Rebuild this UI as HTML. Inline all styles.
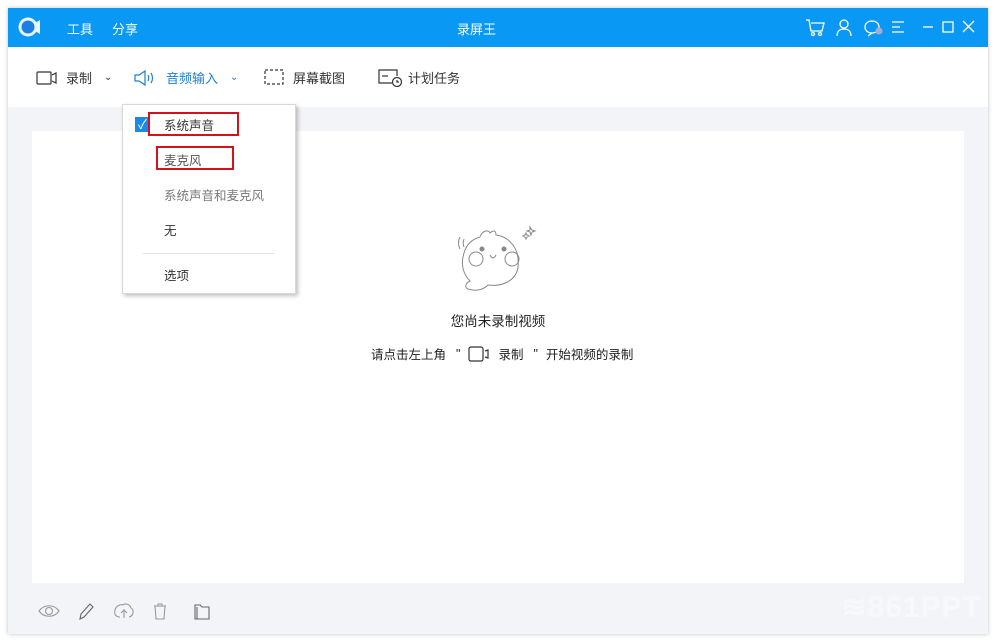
<!DOCTYPE html>
<html><head><meta charset="utf-8">
<style>
*{margin:0;padding:0;box-sizing:border-box}
body{width:996px;height:642px;background:#fff;font-family:"Liberation Sans","Noto Sans CJK SC",sans-serif;position:relative;overflow:hidden;font-size:13px;color:#333}
.win{position:absolute;left:8px;top:8px;width:980px;height:626px;background:#f3f4f8;box-shadow:0 0 4px rgba(0,0,0,.25)}
.title{position:absolute;left:0;top:0;width:980px;height:39px;background:#0a98f5;color:#fff}
.title span{position:absolute;top:11px;font-size:13px}
.tool{position:absolute;left:0;top:39px;width:980px;height:60px;background:#fff}
.tool .it{position:absolute;top:21px;font-size:13px;color:#333;display:flex;align-items:center}
.content{position:absolute;left:24px;top:123px;width:932px;height:452px;background:#fff}
.menu{position:absolute;left:122px;top:104px;width:174px;height:190px;background:#fff;border:1px solid #d8d8d8;box-shadow:2px 2px 4px rgba(0,0,0,.25)}
.menu div{position:absolute;left:41px;font-size:12.5px}
.red{position:absolute;border:2px solid #d4121c}
svg{display:block}
</style></head><body>
<div class="win">
 <div class="title">
  <svg style="position:absolute;left:10px;top:8px" width="24" height="22" viewBox="0 0 24 22"><circle cx="10" cy="11" r="9.5" fill="#e8f4ff"/><circle cx="10" cy="11" r="6.5" fill="#1a7fe0"/><path d="M17 7l5-3v14l-5-3z" fill="#e8f4ff"/></svg>
  <span style="left:59px">工具</span><span style="left:104px">分享</span>
  <span style="left:449px">录屏王</span>
  <svg style="position:absolute;left:796px;top:9px" width="180" height="22" viewBox="0 0 180 22" fill="none" stroke="#fff" stroke-width="1.3">
   <path d="M2 3h3l2 11h11l2-8H7"/><circle cx="9" cy="17" r="1.5"/><circle cx="16" cy="17" r="1.5"/>
   <circle cx="40" cy="7" r="4"/><path d="M33 19c0-5 3-7 7-7s7 2 7 7"/>
   <path d="M68 16c-4 0-7-2.5-7-6s3-6 7-6 7 2.5 7 6-3 6-7 6l-4 3z"/><circle cx="75" cy="14" r="3.5" fill="#aac" stroke="none"/>
   <path d="M88 5h12M88 10h8M88 15h12"/>
   <path d="M119 10h10"/><rect x="139" y="5" width="10" height="10"/><path d="M159 4l11 11M170 4l-11 11"/>
  </svg>
 </div>
 <div class="tool">
  <div class="it" style="left:28px"><svg width="22" height="16" viewBox="0 0 22 16" fill="none" stroke="#333" stroke-width="1.2"><rect x="1" y="2" width="14" height="12" rx="1"/><path d="M16 5l4-2v10l-4-2"/></svg><span style="margin-left:8px">录制</span><span style="margin-left:12px;font-size:10px">⌄</span></div>
  <div class="it" style="left:126px;color:#1e7fd0"><svg width="24" height="16" viewBox="0 0 24 16" fill="none" stroke="#1e7fd0" stroke-width="1.2"><path d="M1 5h4l6-4v14l-6-4H1z"/><path d="M14 5c1 2 1 4 0 6M17 3c2 3 2 7 0 10"/></svg><span style="margin-left:8px">音频输入</span><span style="margin-left:12px;font-size:10px">⌄</span></div>
  <div class="it" style="left:256px"><svg width="22" height="18" viewBox="0 0 22 18" fill="none" stroke="#333" stroke-width="1.2" stroke-dasharray="3 2"><rect x="1" y="1" width="18" height="14"/></svg><span style="margin-left:7px">屏幕截图</span></div>
  <div class="it" style="left:370px"><svg width="26" height="18" viewBox="0 0 26 18" fill="none" stroke="#333" stroke-width="1.2"><path d="M14 14H1V1h18v6"/><path d="M4 7h6"/><circle cx="19" cy="13" r="4.5" fill="#fff"/><path d="M19 11v2h2"/></svg><span style="margin-left:4px">计划任务</span></div>
 </div>
 <div class="content">
  <svg style="position:absolute;left:422px;top:88px" width="92" height="80" viewBox="0 0 92 80" fill="none" stroke="#888" stroke-width="1"><path d="M26 18c2-6 8-8 10-4 3-3 6-3 6 2 14 2 24 14 22 32-2 14-16 20-30 18-6 6-14 6-20 4-4-2-2-6 2-8-6-6-10-16-6-28 2-8 8-14 16-16z"/><circle cx="22" cy="40" r="7"/><circle cx="58" cy="40" r="7"/><circle cx="28" cy="30" r="2" fill="#888"/><circle cx="50" cy="30" r="2" fill="#888"/><path d="M36 36c2 4 4 4 6 0"/><path d="M6 18c-2 4-2 8 0 12M10 20c-1 3-1 6 0 8"/><path d="M76 8l2 3 3 1-3 1-1 3-1-3-3-1 3-1zM72 14l1 2 2 1-2 1-1 2-1-2-2-1 2-1z"/></svg>
  <div style="position:absolute;left:0;width:932px;text-align:center;top:179px;font-size:13.5px;color:#222">您尚未录制视频</div>
  <div style="position:absolute;left:339px;top:213px;font-size:12.5px;color:#222;display:flex;align-items:center">请点击左上角 <span style="margin:0 8px 0 10px">"</span><svg width="22" height="16" viewBox="0 0 22 16" fill="none" stroke="#333" stroke-width="1.2"><rect x="1" y="1" width="14" height="14" rx="2"/><path d="M17 5l3-1v8l-3-1"/></svg><span style="margin-left:8px">录制</span><span style="margin:0 8px 0 10px">"</span>开始视频的录制</div>
 </div>
 <svg style="position:absolute;left:30px;top:594px" width="180" height="18" viewBox="0 0 180 18" fill="none" stroke="#666" stroke-width="1.1">
  <path d="M1 9c5-7 15-7 20 0-5 7-15 7-20 0z" stroke="#999"/><circle cx="11" cy="9" r="3.5" stroke="#999"/>
  <path d="M42 17l1-5 9-10 3 3-9 10zM42 17l4-2"/>
  <path d="M82 15c-5 0-6-4-5-7 1-4 5-6 8-5 2-2 7-1 8 3 3 1 3 8-2 9M86 16V8l-3 3M86 8l3 3" stroke="#999"/>
  <path d="M116 4h12M120 4V2h4v2M117 4l1 13h8l1-13" stroke="#999"/>
  <path d="M157 3h5l2 2h7v12h-14zM159 5v12" />
 </svg>
 <div style="position:absolute;right:6px;top:582px;font:bold 30px 'Liberation Sans',sans-serif;color:#f7f8fb;letter-spacing:1px">≋861PPT</div>
</div>
<div class="menu">
 <div style="left:12px;top:12px;width:15px;height:15px;background:#1a8ae6;color:#fff;font-size:13px;line-height:15px;text-align:center">✓</div>
 <div style="top:10px">系统声音</div>
 <div style="top:45px;color:#555">麦克风</div>
 <div style="top:80px;color:#777">系统声音和麦克风</div>
 <div style="top:115px">无</div>
 <div style="left:20px;top:148px;width:132px;height:1px;background:#e4e4e4"></div>
 <div style="top:160px">选项</div>
</div>
<div class="red" style="left:148px;top:112px;width:91px;height:24px"></div>
<div class="red" style="left:156px;top:146px;width:78px;height:24px"></div>
</body></html>
